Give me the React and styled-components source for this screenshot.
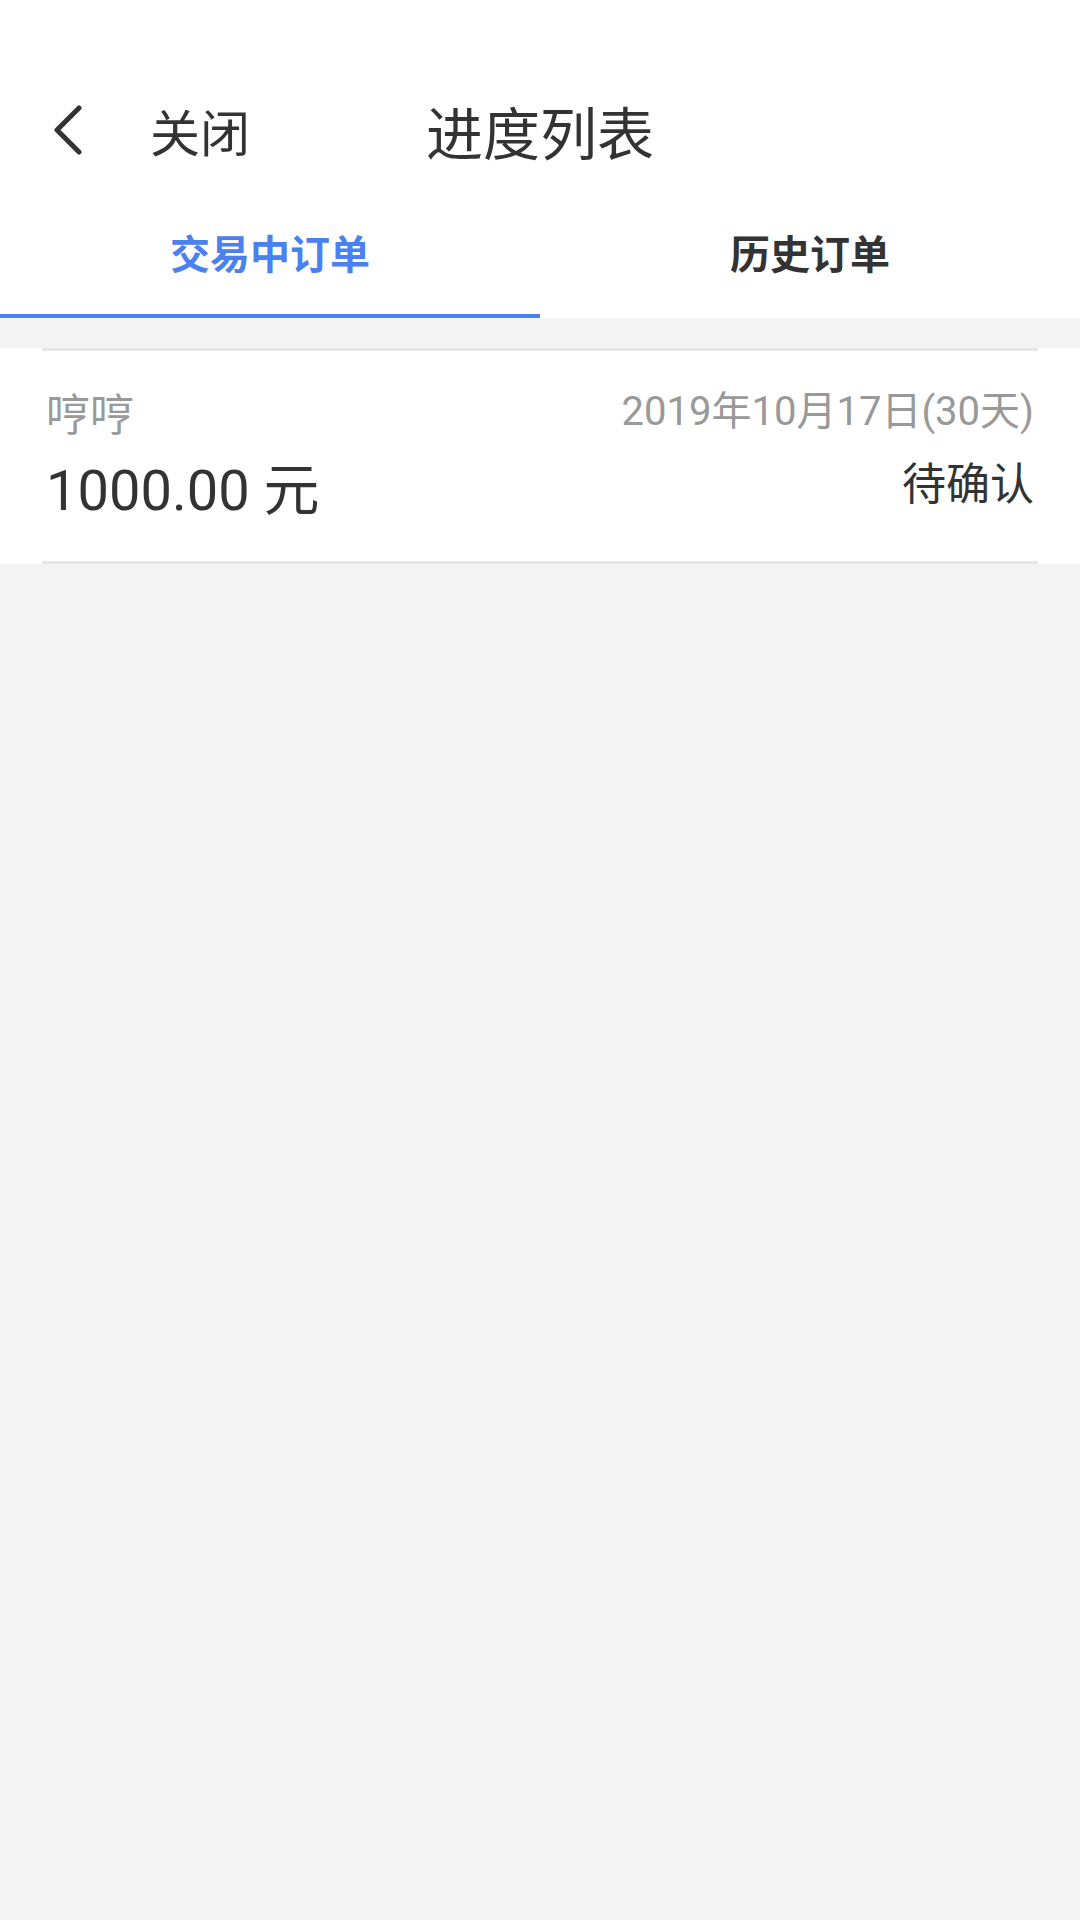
import React, { useState } from "react";
import styled, { createGlobalStyle } from "styled-components";

const GlobalStyle = createGlobalStyle`
  html, body { margin: 0; padding: 0; }
  body {
    font-family: Roboto, "Noto Sans CJK SC", "Noto Sans", sans-serif;
    background: #f4f4f4;
    -webkit-font-smoothing: antialiased;
  }
`;

const Page = styled.div`
  width: 1080px;
  min-height: 1920px;
  background: #f4f4f4;
`;

const Top = styled.div`
  background: #ffffff;
  padding-top: 80px;
`;

const Header = styled.div`
  height: 100px;
  display: grid;
  grid-template-columns: 1fr auto 1fr;
  align-items: center;
`;

const Left = styled.button`
  display: flex;
  align-items: center;
  gap: 67px;
  padding: 0 0 0 51px;
  border: 0;
  background: none;
  cursor: pointer;
  justify-self: start;
  font-family: inherit;
`;

const CloseText = styled.span`
  font-size: 50px;
  color: #333333;
  line-height: 1;
  font-family: "Noto Sans CJK SC", sans-serif;
`;

const Title = styled.h1`
  margin: 0;
  font-size: 57px;
  font-weight: 400;
  color: #333333;
  line-height: 1;
  font-family: "Noto Sans CJK SC", sans-serif;
`;

const TabBar = styled.div`
  display: flex;
  height: 138px;
`;

const Tab = styled.div`
  flex: 1;
  display: flex;
  align-items: center;
  justify-content: center;
  padding-top: 10px;
  box-sizing: border-box;
  font-size: 40px;
  font-weight: 700;
  font-family: "Noto Sans CJK SC", sans-serif;
  color: ${(p) => (p.$active ? "#4a80f0" : "#333333")};
  border-bottom: 4px solid ${(p) => (p.$active ? "#4a80f0" : "transparent")};
  cursor: pointer;
`;

const List = styled.div`
  padding-top: 30px;
`;

const RowOuter = styled.div`
  background: #ffffff;
  padding: 0 42px;
`;

const RowInner = styled.div`
  border-top: 3px solid #e6e6e6;
  border-bottom: 3px solid #e6e6e6;
  padding: 36px 4px 28px 4px;
  display: flex;
  flex-direction: column;
  gap: 12px;
`;

const Line = styled.div`
  display: flex;
  justify-content: space-between;
  align-items: center;
`;

const Name = styled.span`
  font-size: 44px;
  line-height: 50px;
  color: #999999;
  font-family: "Noto Sans CJK SC", sans-serif;
`;

const DateText = styled.span`
  font-size: 40px;
  line-height: 50px;
  color: #999999;
`;

const Amount = styled.span`
  font-size: 56px;
  line-height: 64px;
  color: #333333;
`;

const Status = styled.span`
  font-size: 44px;
  line-height: 64px;
  color: #333333;
  margin-bottom: 20px;
  font-family: "Noto Sans CJK SC", sans-serif;
`;

const BackIcon = () => (
  <svg width="32" height="50" viewBox="0 0 32 50" fill="none">
    <polyline
      points="28,3 6,25 28,47"
      stroke="#333333"
      strokeWidth="5"
      strokeLinecap="round"
      strokeLinejoin="round"
    />
  </svg>
);

const orders = [
  { name: "哼哼", date: "2019年10月17日(30天)", amount: "1000.00 元", status: "待确认" },
];

export default function App() {
  const [tab, setTab] = useState(0);
  return (
    <Page>
      <GlobalStyle />
      <Top>
        <Header>
          <Left>
            <BackIcon />
            <CloseText>关闭</CloseText>
          </Left>
          <Title>进度列表</Title>
          <div />
        </Header>
        <TabBar>
          <Tab $active={tab === 0} onClick={() => setTab(0)}>交易中订单</Tab>
          <Tab $active={tab === 1} onClick={() => setTab(1)}>历史订单</Tab>
        </TabBar>
      </Top>
      <List>
        {tab === 0 &&
          orders.map((o, i) => (
            <RowOuter key={i}>
              <RowInner>
                <Line>
                  <Name>{o.name}</Name>
                  <DateText>{o.date}</DateText>
                </Line>
                <Line>
                  <Amount>{o.amount}</Amount>
                  <Status>{o.status}</Status>
                </Line>
              </RowInner>
            </RowOuter>
          ))}
      </List>
    </Page>
  );
}
